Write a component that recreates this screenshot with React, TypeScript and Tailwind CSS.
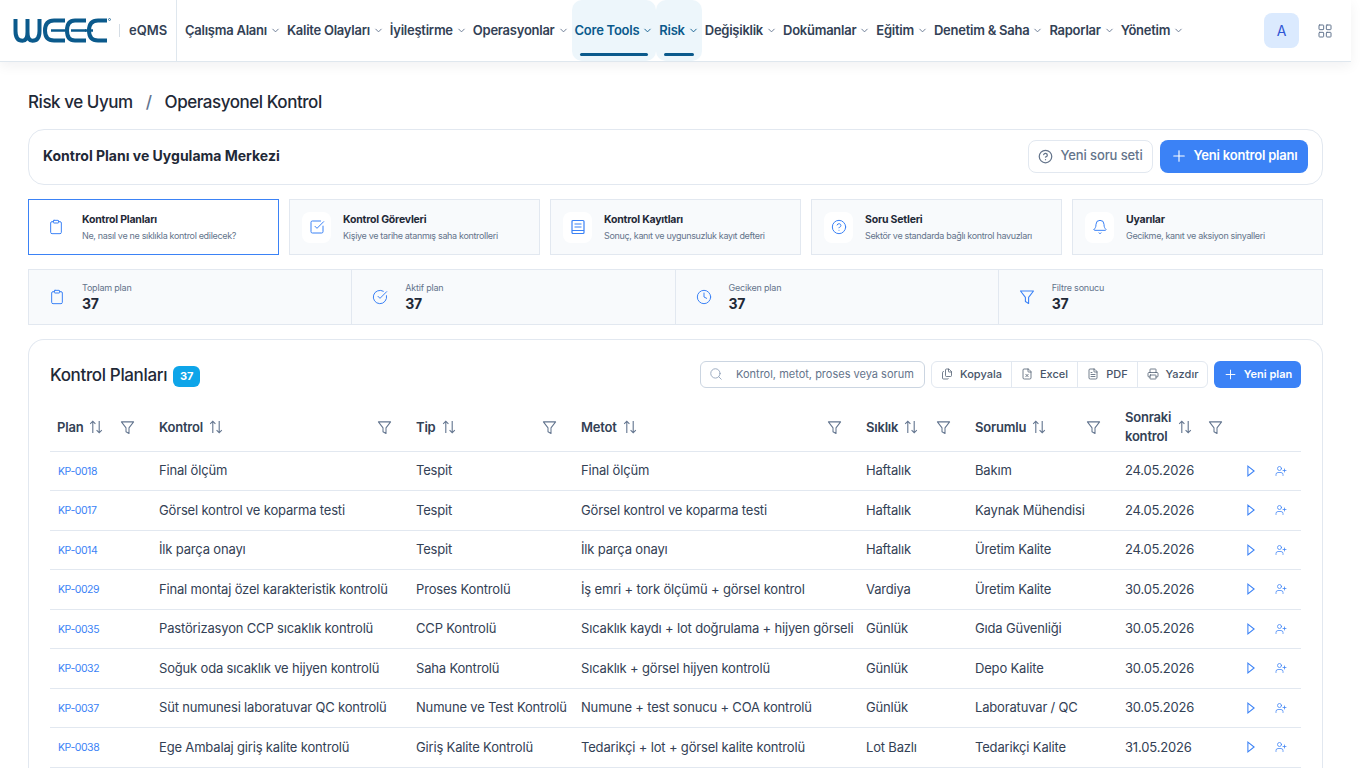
import { Bell, ChevronDown, CircleCheckBig, CircleHelp, Clipboard, Clock, FileText, FileX, Files, LayoutGrid, Plus, Printer, Search, SquareCheckBig, UserPlus } from "lucide-react";

const nav = [
  { label: "Çalışma Alanı" },
  { label: "Kalite Olayları" },
  { label: "İyileştirme" },
  { label: "Operasyonlar" },
  { label: "Core Tools", active: true },
  { label: "Risk", active: true },
  { label: "Değişiklik" },
  { label: "Dokümanlar" },
  { label: "Eğitim" },
  { label: "Denetim & Saha" },
  { label: "Raporlar" },
  { label: "Yönetim" },
];

function BookIcon({ className }: { className?: string; strokeWidth?: number }) {
  return (
    <svg viewBox="0 0 16 16" fill="none" stroke="currentColor" strokeWidth="1.2" className={className}>
      <rect x="2" y="1.500" width="12" height="13" rx="1" />
      <path d="M2 11.500h12M4.500 5h7M4.500 8h7" />
    </svg>
  );
}

const tabs = [
  { title: "Kontrol Planları", sub: "Ne, nasıl ve ne sıklıkla kontrol edilecek?", icon: Clipboard, active: true },
  { title: "Kontrol Görevleri", sub: "Kişiye ve tarihe atanmış saha kontrolleri", icon: SquareCheckBig },
  { title: "Kontrol Kayıtları", sub: "Sonuç, kanıt ve uygunsuzluk kayıt defteri", icon: BookIcon },
  { title: "Soru Setleri", sub: "Sektör ve standarda bağlı kontrol havuzları", icon: CircleHelp },
  { title: "Uyarılar", sub: "Gecikme, kanıt ve aksiyon sinyalleri", icon: Bell },
];

const rows = [
  ["KP-0018", "Final ölçüm", "Tespit", "Final ölçüm", "Haftalık", "Bakım", "24.05.2026"],
  ["KP-0017", "Görsel kontrol ve koparma testi", "Tespit", "Görsel kontrol ve koparma testi", "Haftalık", "Kaynak Mühendisi", "24.05.2026"],
  ["KP-0014", "İlk parça onayı", "Tespit", "İlk parça onayı", "Haftalık", "Üretim Kalite", "24.05.2026"],
  ["KP-0029", "Final montaj özel karakteristik kontrolü", "Proses Kontrolü", "İş emri + tork ölçümü + görsel kontrol", "Vardiya", "Üretim Kalite", "30.05.2026"],
  ["KP-0035", "Pastörizasyon CCP sıcaklık kontrolü", "CCP Kontrolü", "Sıcaklık kaydı + lot doğrulama + hijyen görseli", "Günlük", "Gıda Güvenliği", "30.05.2026"],
  ["KP-0032", "Soğuk oda sıcaklık ve hijyen kontrolü", "Saha Kontrolü", "Sıcaklık + görsel hijyen kontrolü", "Günlük", "Depo Kalite", "30.05.2026"],
  ["KP-0037", "Süt numunesi laboratuvar QC kontrolü", "Numune ve Test Kontrolü", "Numune + test sonucu + COA kontrolü", "Günlük", "Laboratuvar / QC", "30.05.2026"],
  ["KP-0038", "Ege Ambalaj giriş kalite kontrolü", "Giriş Kalite Kontrolü", "Tedarikçi + lot + görsel kalite kontrolü", "Lot Bazlı", "Tedarikçi Kalite", "31.05.2026"],
];

function Funnel({ className }: { className?: string }) {
  return (
    <svg viewBox="0 0 16 16" fill="none" stroke="currentColor" strokeWidth="1.1" strokeLinejoin="round" className={className}>
      <path d="M1.500 2h13L9.600 8.400V14.400L6.400 12.600V8.400z" />
    </svg>
  );
}

function SortIcon() {
  return (
    <svg viewBox="0 0 14 14" fill="none" stroke="currentColor" strokeWidth="1.1" className="w-[14px] h-[14px] shrink-0 text-slate-500">
      <path d="M3.800 13V1.200M1.200 3.800l2.600-2.600 2.600 2.600" />
      <path d="M10.200 1v11.800M7.600 10.200l2.600 2.600 2.600-2.600" />
    </svg>
  );
}

function Logo() {
  return (
    <svg viewBox="0 0 98 25" fill="none" stroke="#0b5a8c" className="w-[98px] h-[25px]">
      <path d="M2.500 1V13Q2.500 22.800 9.500 22.800Q14.500 22.800 14.500 14V1M14.500 14Q14.500 22.800 19.500 22.800Q26.500 22.800 26.500 13V1" strokeWidth="4" />
      <path d="M52 2.500H41Q32 2.500 32 12.500Q32 22.500 41 22.500H52" strokeWidth="4" />
      <path d="M38 12.500H52" strokeWidth="2.500" />
      <path d="M73 2.500H62Q54 2.500 54 12.500Q54 22.500 62 22.500H73" strokeWidth="4" />
      <path d="M58 12.500H73" strokeWidth="2.500" />
      <path d="M94 2.500H85Q76 2.500 76 12.500Q76 22.500 85 22.500H94" strokeWidth="4" />
      <path d="M72 12.500H80" strokeWidth="2.500" />
      <circle cx="96.500" cy="1.500" r="1" strokeWidth="0.7" />
    </svg>
  );
}

const headers = [
  { label: "Plan", width: "w-[101px]", pad: "pl-[7px] pr-[8px]", textWidth: "", filter: "mr-[8px]" },
  { label: "Kontrol", width: "w-[257px]", pad: "px-[8px]", textWidth: "", filter: "mr-[8px]" },
  { label: "Tip", width: "w-[165px]", pad: "px-[8px]", textWidth: "", filter: "mr-[8px]" },
  { label: "Metot", width: "w-[285px]", pad: "px-[8px]", textWidth: "", filter: "mr-[8px]" },
  { label: "Sıklık", width: "w-[109px]", pad: "px-[8px]", textWidth: "", filter: "mr-[8px]" },
  { label: "Sorumlu", width: "w-[150px]", pad: "px-[8px]", textWidth: "", filter: "mr-[8px]" },
  { label: "Sonraki kontrol", width: "w-[115px]", pad: "px-[8px]", textWidth: "w-[47px]", filter: "mr-px" },
];

export default function App() {
  return (
    <div className="h-screen overflow-hidden bg-white font-['Inter',sans-serif] text-[#334155]">
      <div className="w-[1351px]">
        <header className="h-[62px] flex items-center border-b border-[#dfe7ee] shadow-[0_4px_12px_rgba(15,23,42,0.06)] relative z-10 bg-white">
          <div className="h-full flex items-center pl-[13px] w-[177px] border-r border-[#dfe7ee]">
            <Logo />
            <div className="w-px h-[13px] bg-[#d5dde5] ml-[8px]" />
            <span className="ml-[9px] text-[13px] font-semibold text-[#334155]">eQMS</span>
          </div>
          <nav className="flex items-center h-full pl-[5px] flex-1">
            {nav.map((item) => (
              <div
                key={item.label}
                className={`relative h-full flex items-center px-[3px] gap-[3px] text-[13px] tracking-[-0.25px] font-semibold rounded-[10px] ${
                  item.active ? "bg-[#edf6fb] text-[#0b5a8c]" : "text-[#334155]"
                }`}
              >
                {item.label}
                <ChevronDown className={`w-[11px] h-[11px] ${item.active ? "text-[#0b5a8c]" : "text-slate-500"}`} />
                {item.active && <div className="absolute left-[8px] right-[8px] bottom-[5px] h-[3px] rounded-full bg-[#0b5a8c]" />}
              </div>
            ))}
          </nav>
          <div className="flex items-center pr-[18px]">
            <div className="w-[35px] h-[35px] rounded-lg bg-[#dbeafe] text-[#2f55d4] text-sm flex items-center justify-center">A</div>
            <LayoutGrid className="ml-[18px] w-[16px] h-[16px] text-slate-500" strokeWidth={1.5} />
          </div>
        </header>

        <main className="px-[28px] pt-[31px]">
          <div className="flex items-center h-[20px] text-[17px] font-medium text-[#1f2937] tracking-[-0.45px]">
            <span>Risk ve Uyum</span>
            <span className="mx-[13px] text-slate-500">/</span>
            <span>Operasyonel Kontrol</span>
          </div>

          <div className="mt-[16px] h-[56px] rounded-2xl border border-[#e2e8f0] flex items-center justify-between pl-[14px] pr-[14px]">
            <h1 className="-mt-[2px] text-sm font-bold text-[#1f2937]">Kontrol Planı ve Uygulama Merkezi</h1>
            <div className="flex items-center gap-[7px] -mt-[2px]">
              <button className="h-[33px] w-[125px] justify-center rounded-lg border border-[#e2e8f0] text-[#64748b] text-[13px] font-medium flex items-center gap-[7px] tracking-[-0.1px]">
                <CircleHelp className="w-[15px] h-[15px]" />
                Yeni soru seti
              </button>
              <button className="h-[33px] w-[148px] justify-center rounded-lg bg-[#3b82f6] text-white text-[13px] font-semibold flex items-center gap-[5px] tracking-[-0.2px]">
                <Plus className="w-[18px] h-[18px]" strokeWidth={1.5} />
                Yeni kontrol planı
              </button>
            </div>
          </div>

          <div className="mt-[14px] grid grid-cols-5 gap-[10px]">
            {tabs.map((t) => {
              const Icon = t.icon;
              return (
                <div
                  key={t.title}
                  className={`h-[56px] border flex items-center pl-[12px] gap-[12px] ${
                    t.active ? "bg-white border-[#3b82f6]" : "bg-[#f8fafc] border-[#e2e8f0]"
                  }`}
                >
                  <div className={`w-[29px] h-[31px] shrink-0 rounded-lg flex items-center justify-center ${t.active ? "" : "bg-white"}`}>
                    <Icon className="w-[16px] h-[16px] text-[#3b82f6]" strokeWidth={1.5} />
                  </div>
                  <div className="min-w-0">
                    <div className="text-[10.5px] font-bold text-[#1f2937] leading-[14px] tracking-[-0.2px]">{t.title}</div>
                    <div className="mt-[2px] text-[9px] text-[#64748b] leading-[13px] whitespace-nowrap tracking-[-0.33px]">{t.sub}</div>
                  </div>
                </div>
              );
            })}
          </div>

          <div className="mt-[14px] grid grid-cols-4 h-[56px] border border-[#e2e8f0] bg-[#f8fafc]">
            {[
              { label: "Toplam plan", icon: Clipboard },
              { label: "Aktif plan", icon: CircleCheckBig },
              { label: "Geciken plan", icon: Clock },
              { label: "Filtre sonucu", icon: null },
            ].map((s, i) => {
              const Icon = s.icon;
              return (
                <div key={s.label} className={`flex items-center pl-[20px] gap-[17px] ${i < 3 ? "border-r border-[#e2e8f0]" : ""}`}>
                  {Icon ? <Icon className="w-[16px] h-[16px] text-[#3b82f6]" strokeWidth={1.5} /> : <Funnel className="w-[16px] h-[16px] text-[#3b82f6]" />}
                  <div>
                    <div className="text-[9px] text-[#64748b] leading-[13px] tracking-[-0.2px]">{s.label}</div>
                    <div className="mt-px text-sm font-bold text-[#1f2937] leading-[18px] tracking-[-0.2px]">37</div>
                  </div>
                </div>
              );
            })}
          </div>

          <section className="mt-[14px] rounded-t-2xl border border-b-0 border-[#e2e8f0] px-[21px] pb-[30px]">
            <div className="h-[64px] flex items-center justify-between pt-[6px]">
              <div className="flex items-center gap-[6px] mt-[2px]">
                <h2 className="text-[17px] font-medium text-[#1f2937] tracking-[-0.35px]">Kontrol Planları</h2>
                <span className="h-[21px] w-[27px] justify-center rounded-md bg-[#0ea5e9] text-white text-[11px] font-bold flex items-center">37</span>
              </div>
              <div className="flex items-center -mt-[2px]">
                <div className="h-[27px] w-[225px] rounded-md border border-[#cbd5e1] flex items-center pl-[8px] gap-[13px] text-[11px] text-[#64748b]">
                  <Search className="w-[14px] h-[14px] text-slate-400" strokeWidth={1.5} />
                  Kontrol, metot, proses veya sorum
                </div>
                <div className="ml-[6px] h-[27px] rounded-md border border-[#e2e8f0] flex items-center text-[11px] font-medium text-[#475569]">
                  <span className="h-full w-[80px] justify-center flex items-center gap-[7px] border-r border-[#e2e8f0]"><Files className="w-[12px] h-[12px]" strokeWidth={1.5} />Kopyala</span>
                  <span className="h-full w-[66px] justify-center flex items-center gap-[7px] border-r border-[#e2e8f0]"><FileX className="w-[12px] h-[12px]" strokeWidth={1.5} />Excel</span>
                  <span className="h-full w-[60px] justify-center flex items-center gap-[7px] border-r border-[#e2e8f0]"><FileText className="w-[12px] h-[12px]" strokeWidth={1.5} />PDF</span>
                  <span className="h-full w-[69px] justify-center flex items-center gap-[7px]"><Printer className="w-[12px] h-[12px]" strokeWidth={1.5} />Yazdır</span>
                </div>
                <button className="ml-[6px] h-[27px] w-[87px] justify-center rounded-md bg-[#3b82f6] text-white text-[11px] font-semibold flex items-center gap-[6px]">
                  <Plus className="w-[15px] h-[15px]" strokeWidth={1.5} />
                  Yeni plan
                </button>
              </div>
            </div>

            <table className="w-full table-fixed text-[13px] text-[#334155]">
              <thead>
                <tr className="h-[47px] border-b border-[#e2e8f0]">
                  {headers.map((h) => (
                    <th key={h.label} className={`${h.width} ${h.pad} text-left font-semibold text-[13px] text-[#334155] leading-[19px] tracking-[-0.2px]`}>
                      <div className="flex items-center">
                        <span className={`mr-[6px] ${h.textWidth}`}>{h.label}</span>
                        <SortIcon />
                        <Funnel className={`ml-auto w-[15px] h-[15px] shrink-0 text-slate-500 ${h.filter}`} />
                      </div>
                    </th>
                  ))}
                  <th />
                </tr>
              </thead>
              <tbody>
                {rows.map((r) => (
                  <tr key={r[0]} className="h-[39.5px] border-b border-[#e2e8f0]">
                    <td className="px-[8px] pt-[2px] text-[10.5px] tracking-[-0.45px] text-[#3b82f6]">{r[0]}</td>
                    {r.slice(1).map((c, i) => (
                      <td key={i} className="px-[8px] whitespace-nowrap tracking-[-0.17px]">{c}</td>
                    ))}
                    <td>
                      <div className="flex items-center justify-end gap-[20px] pr-[14px] text-[#3b82f6]">
                        <svg viewBox="0 0 9 13" fill="none" stroke="currentColor" strokeWidth="1.2" className="w-[8px] h-[12px]">
                          <path d="M1 1l7 5.500-7 5.500z" />
                        </svg>
                        <UserPlus className="w-[12px] h-[12px]" strokeWidth={1.5} />
                      </div>
                    </td>
                  </tr>
                ))}
              </tbody>
            </table>
          </section>
        </main>
      </div>
    </div>
  );
}
